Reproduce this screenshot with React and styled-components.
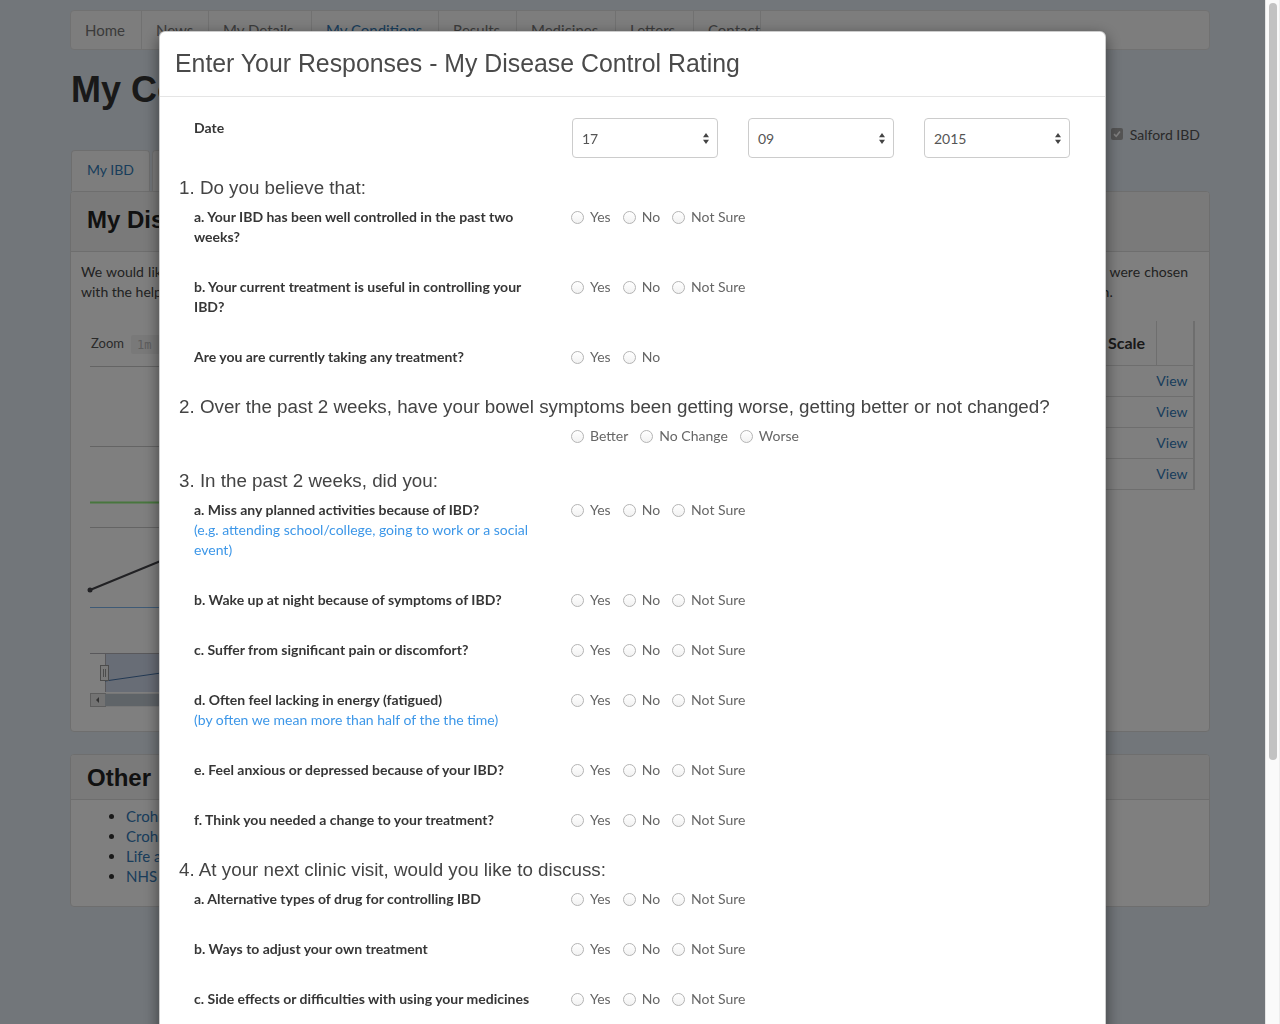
import React from "react";
import styled, { createGlobalStyle } from "styled-components";

const GlobalStyle = createGlobalStyle`
  html, body { margin: 0; padding: 0; }
  body {
    background: #e4ecf4;
    font-family: Lato, "Noto Sans", sans-serif;
    font-size: 14px;
    color: #333;
    overflow: hidden;
  }
  * { box-sizing: border-box; }
`;

/* ---------- background page ---------- */
const Page = styled.div`
  width: 1140px;
  margin: 0 auto;
  padding-top: 10px;
`;

const NavBar = styled.nav`
  display: flex;
  height: 40px;
  background: #fafafa;
  border: 1px solid #e3e3e3;
  border-radius: 4px;
`;

const NavItem = styled.a`
  display: block;
  width: ${(p) => (p.$w ? `${p.$w}px` : "auto")};
  padding: 0 0 0 14px;
  line-height: 38px;
  font-size: 15px;
  color: ${(p) => (p.$active ? "#337ab7" : "#777")};
  border-right: 1px solid #e3e3e3;
  text-decoration: none;
  white-space: nowrap;
`;

const PageTitle = styled.h1`
  margin: 20px 0 0 1px;
  font-family: "Liberation Sans", Arial, sans-serif;
  font-size: 36px;
  line-height: 40px;
  font-weight: 700;
  color: #333;
`;

const CheckRow = styled.div`
  display: flex;
  justify-content: flex-end;
  align-items: center;
  gap: 7px;
  padding-right: 10px;
  margin-top: 14px;
  height: 20px;
  font-size: 14px;
  color: #555;
`;

const CheckBox = styled.span`
  width: 12px;
  height: 12px;
  border-radius: 2px;
  background: #a8a8a8;
  display: flex;
  align-items: center;
  justify-content: center;
`;

const Tabs = styled.div`
  display: flex;
  gap: 2px;
  margin-top: 6px;
  padding-left: 1px;
`;

const Tab = styled.div`
  height: 41px;
  line-height: 38px;
  padding: 0 15px;
  background: #fafafa;
  border: 1px solid #ddd;
  border-bottom: none;
  border-radius: 4px 4px 0 0;
  color: ${(p) => (p.$active ? "#337ab7" : "#555")};
  font-size: 14px;
`;

const Panel = styled.section`
  background: #fff;
  border: 1px solid #ddd;
  border-radius: 4px;
  margin-bottom: ${(p) => p.$mb || 0}px;
  overflow: hidden;
`;

const PanelHeader = styled.div`
  background: #f5f5f5;
  border-bottom: 1px solid #ddd;
  padding: ${(p) => (p.$tall ? "15px 16px 18px" : "10px 16px 8px")};
`;

const PanelTitle = styled.h2`
  margin: 0;
  font-family: "Liberation Sans", Arial, sans-serif;
  font-size: 24px;
  line-height: 26px;
  font-weight: 700;
  color: #222;
`;

const PanelBody = styled.div`
  padding: ${(p) => p.$pad || "10px"};
`;

const Para = styled.div`
  margin: 0 0 19px;
  padding-right: 11px;
  line-height: 20px;
  color: #444;
`;

const ParaLine = styled.span`
  display: block;
  text-align: ${(p) => (p.$justify ? "justify" : "left")};
  text-align-last: ${(p) => (p.$justify ? "justify" : "left")};
`;

const ChartRow = styled.div`
  display: flex;
  gap: 30px;
  padding-right: 4px;
`;

const ChartBox = styled.div`
  flex: 1;
  height: 400px;
`;

const TableWrap = styled.div`
  width: 332px;
  flex: none;
  border-right: 1px solid #ddd;
  padding-right: 2px;
  align-self: flex-start;
`;

const Table = styled.table`
  width: 100%;
  table-layout: fixed;
  border-collapse: collapse;
  font-size: 14px;
  border-right: 1px solid #ddd;
`;

const Th = styled.th`
  height: 44px;
  padding: 0 8px;
  text-align: left;
  font-size: 16px;
  font-weight: 700;
  color: #333;
  border-bottom: 1px solid #ddd;
  border-right: ${(p) => (p.$sep ? "1px solid #ddd" : "none")};
  white-space: nowrap;
`;

const Td = styled.td`
  height: 31px;
  padding: ${(p) => (p.$right ? "0 5px 0 0" : "0 8px")};
  border-bottom: 1px solid #ddd;
  color: #555;
  text-align: ${(p) => (p.$right ? "right" : "left")};
  white-space: nowrap;
  overflow: hidden;
`;

const Link = styled.a`
  color: #337ab7;
  text-decoration: none;
  font-size: ${(p) => (p.$small ? 14 : 15)}px;
`;

const LinkList = styled.ul`
  margin: 0;
  padding-left: 45px;
  line-height: 20px;
  font-size: 15px;
  li::marker { color: #333; }
`;

/* ---------- modal layer ---------- */
const Backdrop = styled.div`
  position: fixed;
  inset: 0;
  background: rgba(0, 0, 0, 0.5);
`;

const ModalLayer = styled.div`
  position: fixed;
  inset: 0;
  display: flex;
`;

const ModalArea = styled.div`
  flex: 1;
  overflow: hidden;
`;

const ScrollTrack = styled.div`
  width: 15px;
  flex: none;
  background: #fafafa;
  border-left: 1px solid #e4e4e4;
  border-right: 1px solid #ededed;
  padding: 3px 2px 0 3px;
`;

const ScrollThumb = styled.div`
  height: 757px;
  background: #c2c2c2;
  border-radius: 4px;
`;

const Dialog = styled.div`
  width: 947px;
  margin: 31px auto 30px;
  background: #fff;
  border: 1px solid rgba(0, 0, 0, 0.2);
  border-radius: 6px;
  box-shadow: 0 5px 15px rgba(0, 0, 0, 0.5);
`;

const ModalHeader = styled.div`
  padding: 15px 15px;
  border-bottom: 1px solid #e5e5e5;
`;

const ModalTitle = styled.h3`
  margin: 0;
  font-family: "Liberation Sans", Arial, sans-serif;
  font-size: 24.85px;
  line-height: 34px;
  font-weight: 400;
  color: #4a4a4a;
`;

const ModalBody = styled.div`
  padding: 21px 20px 20px 19px;
`;

const SectionHeading = styled.h4`
  margin: 0 0 9px;
  font-family: "Liberation Sans", Arial, sans-serif;
  font-size: 18.8px;
  line-height: 20px;
  font-weight: 400;
  color: #444;
  white-space: nowrap;
`;

const Row = styled.div`
  display: flex;
  align-items: flex-start;
  margin-bottom: ${(p) => p.$mb ?? 30}px;
`;

const LabelCol = styled.div`
  width: 393px;
  flex: none;
  padding: 0 36px 0 15px;
  line-height: 20px;
`;

const QLabel = styled.div`
  font-weight: 700;
  color: #363636;
`;

const Hint = styled.div`
  color: #3d97e8;
`;

const SelectGroup = styled.div`
  display: flex;
  gap: 30px;
`;

const SelectBox = styled.div`
  width: 146px;
  height: 40px;
  border: 1px solid #ccc;
  border-radius: 4px;
  display: flex;
  align-items: center;
  justify-content: space-between;
  padding: 0 8px 0 9px;
  color: #555;
  font-size: 14px;
  background: #fff;
`;

const RadioGroup = styled.div`
  display: flex;
  gap: 12px;
  margin-left: -1px;
  line-height: 20px;
`;

const RadioLabel = styled.label`
  display: flex;
  align-items: center;
  gap: 6px;
  color: #666;
  font-size: 14px;
`;

const Radio = styled.input.attrs({ type: "radio" })`
  appearance: none;
  -webkit-appearance: none;
  margin: 0;
  width: 13px;
  height: 13px;
  border-radius: 50%;
  border: 1px solid #b4b4b4;
  background: linear-gradient(#ffffff, #f2f2f2);
`;

const TextArea = styled.div`
  height: 80px;
  border: 1px solid #ccc;
  border-radius: 4px;
`;

const ModalFooter = styled.div`
  display: flex;
  justify-content: flex-end;
  gap: 8px;
  padding: 15px;
  border-top: 1px solid #e5e5e5;
`;

const Button = styled.button`
  height: 34px;
  padding: 0 14px;
  font-family: Lato, sans-serif;
  font-size: 14px;
  border-radius: 4px;
  border: 1px solid ${(p) => (p.$primary ? "#2e6da4" : "#ccc")};
  background: ${(p) => (p.$primary ? "#337ab7" : "#fff")};
  color: ${(p) => (p.$primary ? "#fff" : "#333")};
`;

/* ---------- pieces ---------- */
const Arrows = () => (
  <svg width="6" height="11" viewBox="0 0 6 11">
    <path d="M0 4.2 L3 0 L6 4.2 Z M0 6.8 L3 11 L6 6.8 Z" fill="#444" />
  </svg>
);

const Select = ({ value }) => (
  <SelectBox>
    <span>{value}</span>
    <Arrows />
  </SelectBox>
);

const YNS = ["Yes", "No", "Not Sure"];
const YN = ["Yes", "No"];

const Options = ({ name, options }) => (
  <RadioGroup>
    {options.map((o) => (
      <RadioLabel key={o}>
        <Radio name={name} />
        {o}
      </RadioLabel>
    ))}
  </RadioGroup>
);

const Question = ({ id, label, hint, options = YNS, mb }) => (
  <Row $mb={mb}>
    <LabelCol>
      {label && <QLabel>{label}</QLabel>}
      {hint && <Hint>{hint}</Hint>}
    </LabelCol>
    <Options name={id} options={options} />
  </Row>
);

const Chart = () => (
  <svg width="100%" height="400">
    <text x="10" y="27" fontFamily="Lato, sans-serif" fontSize="13" fill="#555">Zoom</text>
    <rect x="50" y="14" width="40" height="19" rx="2" fill="#f2f2f2" />
    <text x="56" y="28" fontFamily="'DejaVu Sans Mono', monospace" fontSize="12" fill="#bbb">1m</text>
    <text x="98" y="28" fontFamily="'DejaVu Sans Mono', monospace" fontSize="12" fill="#bbb">3m</text>
    <line x1="9" y1="45.5" x2="100%" y2="45.5" stroke="#c8c8c8" />
    <line x1="9" y1="125.5" x2="100%" y2="125.5" stroke="#c8c8c8" />
    <line x1="9" y1="181.5" x2="100%" y2="181.5" stroke="#90ed7d" strokeWidth="2" />
    <line x1="9" y1="206.5" x2="100%" y2="206.5" stroke="#c8c8c8" />
    <line x1="9" y1="286.5" x2="100%" y2="286.5" stroke="#7cb5ec" />
    <polyline points="9,269 160,207 320,160 520,130 700,100" fill="none" stroke="#434348" strokeWidth="2" />
    <circle cx="9" cy="269" r="2.5" fill="#434348" />
    <line x1="9" y1="332.5" x2="100%" y2="332.5" stroke="#b2b1b6" />
    <rect x="24" y="333" width="600" height="38" fill="rgba(102,133,194,0.3)" />
    <line x1="24.5" y1="333" x2="24.5" y2="371" stroke="#b2b1b6" />
    <polyline points="24,360 80,352 200,340 400,338 600,336" fill="none" stroke="#4572a7" />
    <rect x="19.5" y="344.5" width="8" height="15" fill="#f2f2f2" stroke="#999" />
    <line x1="22.5" y1="348" x2="22.5" y2="356" stroke="#999" />
    <line x1="24.5" y1="348" x2="24.5" y2="356" stroke="#999" />
    <rect x="9" y="372" width="100%" height="14" fill="#eeeeee" />
    <rect x="9.5" y="372.5" width="15" height="13" fill="#e6e6e6" stroke="#bbb" />
    <path d="M18 376 L15 379 L18 382 Z" fill="#666" />
    <rect x="24" y="373" width="600" height="12" fill="#bfc8d1" />
  </svg>
);

const NAV = [
  ["Home", 71],
  ["News", 67],
  ["My Details", 103],
  ["My Conditions", 127, true],
  ["Results", 78],
  ["Medicines", 99],
  ["Letters", 78],
  ["Contact", 0],
];

export default function App() {
  return (
    <>
      <GlobalStyle />
      <Page>
        <NavBar>
          {NAV.map(([t, w, a]) => (
            <NavItem key={t} $w={w} $active={a}>
              {t}
            </NavItem>
          ))}
        </NavBar>
        <PageTitle>My Conditions</PageTitle>
        <CheckRow>
          <CheckBox>
            <svg width="8" height="8" viewBox="0 0 8 8">
              <path d="M1 4.2 L3.2 6.3 L7 1.6" fill="none" stroke="#fff" strokeWidth="1.6" />
            </svg>
          </CheckBox>
          Salford IBD
        </CheckRow>
        <Tabs>
          <Tab $active>My IBD</Tab>
          <Tab>Other Conditions</Tab>
        </Tabs>
        <Panel $mb={22}>
          <PanelHeader $tall>
            <PanelTitle>My Disease Control Rating</PanelTitle>
          </PanelHeader>
          <PanelBody>
            <Para>
              <ParaLine $justify>
                We would like you to tell us how well you feel your IBD has been controlled over the past two weeks, using the short set of simple questions below. These questions were chosen
              </ParaLine>
              <ParaLine>
                with the help of patients and clinicians as being the most helpful things to ask when deciding how well controlled your IBD is and what to talk about at your consultation.
              </ParaLine>
            </Para>
            <ChartRow>
              <ChartBox>
                <Chart />
              </ChartBox>
              <TableWrap>
                <Table>
                  <colgroup>
                    <col style={{ width: 137 }} />
                    <col style={{ width: 100 }} />
                    <col style={{ width: 56 }} />
                    <col style={{ width: 37 }} />
                  </colgroup>
                  <thead>
                    <tr>
                      <Th>Date</Th>
                      <Th>Score</Th>
                      <Th $sep>Scale</Th>
                      <Th $sep></Th>
                    </tr>
                  </thead>
                  <tbody>
                    {["17/09/2015", "03/09/2015", "20/08/2015", "06/08/2015"].map((d, i) => (
                      <tr key={d}>
                        <Td>{d}</Td>
                        <Td>{[8, 7, 6, 5][i]}</Td>
                        <Td></Td>
                        <Td $right>
                          <Link $small>View</Link>
                        </Td>
                      </tr>
                    ))}
                  </tbody>
                </Table>
              </TableWrap>
            </ChartRow>
          </PanelBody>
        </Panel>
        <Panel>
          <PanelHeader>
            <PanelTitle>Other</PanelTitle>
          </PanelHeader>
          <PanelBody $pad="6px 10px 20px">
            <LinkList>
              <li><Link>Crohn's and Colitis UK</Link></li>
              <li><Link>Crohn's and Colitis Foundation</Link></li>
              <li><Link>Life and IBD</Link></li>
              <li><Link>NHS Choices - Inflammatory bowel disease</Link></li>
            </LinkList>
          </PanelBody>
        </Panel>
      </Page>

      <Backdrop />
      <ModalLayer>
        <ModalArea>
          <Dialog>
            <ModalHeader>
              <ModalTitle>Enter Your Responses - My Disease Control Rating</ModalTitle>
            </ModalHeader>
            <ModalBody>
              <Row $mb={20}>
                <LabelCol>
                  <QLabel>Date</QLabel>
                </LabelCol>
                <SelectGroup>
                  <Select value="17" />
                  <Select value="09" />
                  <Select value="2015" />
                </SelectGroup>
              </Row>

              <SectionHeading>1. Do you believe that:</SectionHeading>
              <Question id="q1a" label="a. Your IBD has been well controlled in the past two weeks?" />
              <Question id="q1b" label="b. Your current treatment is useful in controlling your IBD?" />
              <Question id="q1c" label="Are you are currently taking any treatment?" options={YN} />

              <SectionHeading>
                2. Over the past 2 weeks, have your bowel symptoms been getting worse, getting better or not changed?
              </SectionHeading>
              <Question id="q2" options={["Better", "No Change", "Worse"]} mb={25} />

              <SectionHeading>3. In the past 2 weeks, did you:</SectionHeading>
              <Question
                id="q3a"
                label="a. Miss any planned activities because of IBD?"
                hint="(e.g. attending school/college, going to work or a social event)"
              />
              <Question id="q3b" label="b. Wake up at night because of symptoms of IBD?" />
              <Question id="q3c" label="c. Suffer from significant pain or discomfort?" />
              <Question
                id="q3d"
                label="d. Often feel lacking in energy (fatigued)"
                hint="(by often we mean more than half of the the time)"
              />
              <Question id="q3e" label="e. Feel anxious or depressed because of your IBD?" />
              <Question id="q3f" label="f. Think you needed a change to your treatment?" />

              <SectionHeading>4. At your next clinic visit, would you like to discuss:</SectionHeading>
              <Question id="q4a" label="a. Alternative types of drug for controlling IBD" />
              <Question id="q4b" label="b. Ways to adjust your own treatment" />
              <Question id="q4c" label="c. Side effects or difficulties with using your medicines" />
              <Question id="q4d" label="d. How to cope better with your IBD" />
              <Question id="q4e" label="e. Any other concerns you have" />

              <SectionHeading>5. Anything else you would like to tell us:</SectionHeading>
              <TextArea />
            </ModalBody>
            <ModalFooter>
              <Button>Cancel</Button>
              <Button $primary>Save</Button>
            </ModalFooter>
          </Dialog>
        </ModalArea>
        <ScrollTrack>
          <ScrollThumb />
        </ScrollTrack>
      </ModalLayer>
    </>
  );
}
